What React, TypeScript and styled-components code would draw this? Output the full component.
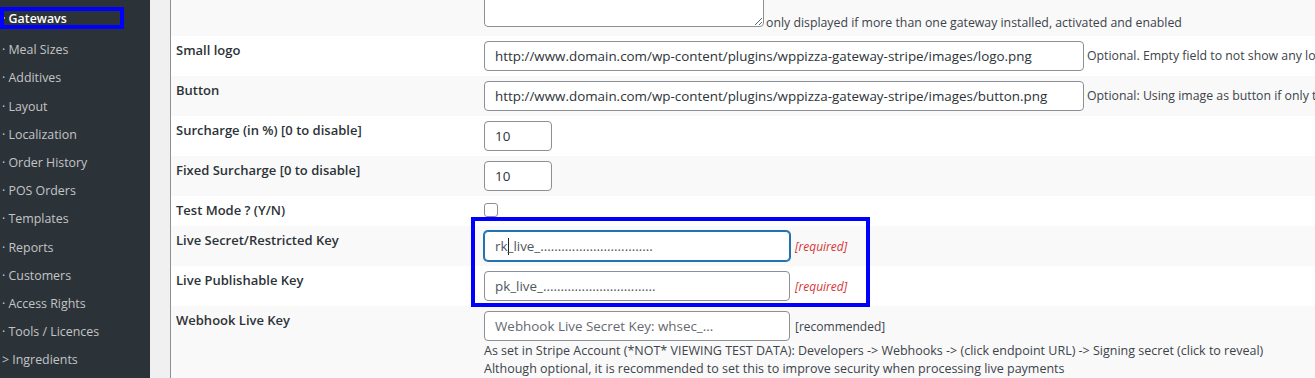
import styled, { createGlobalStyle } from "styled-components";

const GlobalStyle = createGlobalStyle`
  html, body {
    margin: 0;
    padding: 0;
    overflow: hidden;
  }
  body {
    font-family: "Open Sans", "Noto Sans", sans-serif;
    background: #f0f0f1;
  }
`;

const Screen = styled.div`
  position: relative;
  display: flex;
  height: 378px;
  overflow: hidden;
`;

const Sidebar = styled.ul`
  flex: none;
  width: 150px;
  margin: 0;
  padding: 5px 0 0;
  list-style: none;
  background: #2c3338;
`;

const MenuItem = styled.li<{ $current?: boolean }>`
  padding: 5px 0 5px 2px;
  margin-bottom: ${(p) => (p.$current ? "3px" : "0")};
  font-size: 12.4px;
  line-height: 18.2px;
  white-space: nowrap;
  color: ${(p) => (p.$current ? "#fff" : "#c3c4c7")};
  font-weight: ${(p) => (p.$current ? 600 : 400)};
`;

const Gutter = styled.div`
  flex: none;
  width: 20px;
  background: #f0f0f1;
`;

const Panel = styled.div`
  flex: 1;
  min-width: 0;
  overflow: hidden;
  background: #fff;
  border-left: 1px solid #8c8f94;
`;

const Table = styled.div`
  margin-top: -36px;
`;

const Row = styled.div<{ $alt?: boolean }>`
  display: grid;
  grid-template-columns: 313px 1fr;
  padding: 5px 0;
  background: ${(p) => (p.$alt ? "#f9f9f9" : "#fff")};
`;

const Label = styled.div`
  padding-left: 5px;
  font-size: 13px;
  font-weight: 600;
  line-height: 18px;
  color: #2c3338;
`;

const Field = styled.div`
  display: flex;
  align-items: center;
  gap: 3px;
  min-width: 0;
  white-space: nowrap;
`;

const TextareaField = styled(Field)`
  align-items: flex-end;
  gap: 2px;
  padding-bottom: 4px;
`;

const FieldStack = styled.div`
  display: flex;
  flex-direction: column;
  align-items: flex-start;
  min-width: 0;
  white-space: nowrap;
`;

const TextArea = styled.textarea`
  flex: none;
  box-sizing: border-box;
  width: 280px;
  height: 58px;
  margin: 0;
  border: 1px solid #8c8f94;
  border-radius: 4px;
  background: #fff;
  font-family: inherit;
`;

const TextInput = styled.input<{ $width: number; $muted?: boolean }>`
  flex: none;
  box-sizing: border-box;
  width: ${(p) => p.$width}px;
  height: 30px;
  margin: 0;
  padding: 0 10px;
  border: 1px solid #8c8f94;
  border-radius: 4px;
  background: #fff;
  font-family: inherit;
  font-size: 13.4px;
  color: ${(p) => (p.$muted ? "#50575e" : "#2c3338")};
  outline: none;

  &::placeholder {
    color: #646970;
  }
`;

const FocusedInput = styled.div<{ $width: number }>`
  flex: none;
  box-sizing: border-box;
  display: flex;
  align-items: center;
  width: ${(p) => p.$width}px;
  height: 30px;
  padding: 0 10px;
  border: 1px solid #2271b1;
  box-shadow: 0 0 0 1px #2271b1;
  border-radius: 4px;
  background: #fff;
  font-size: 13.4px;
  color: #50575e;
`;

const Caret = styled.span`
  display: inline-block;
  width: 1px;
  height: 17px;
  margin: 0 -1px 0 0;
  background: #1d2327;
`;

const Checkbox = styled.input`
  appearance: none;
  flex: none;
  align-self: flex-start;
  box-sizing: border-box;
  width: 14px;
  height: 14px;
  margin: 2px 0 4px;
  border: 1px solid #8c8f94;
  border-radius: 3px;
  background: #fff;
`;

const Hint = styled.span`
  font-size: 12.3px;
  line-height: 18px;
  color: #3c434a;
`;

const TextareaHint = styled(Hint)`
  margin-bottom: -5px;
`;

const Required = styled.span`
  margin-left: 2px;
  font-size: 12px;
  font-style: italic;
  color: #d63638;
`;

const Note = styled.span`
  margin-left: 2px;
  font-size: 12px;
  color: #3c434a;
`;

const Help = styled.div`
  margin-top: 1px;
  font-size: 12.5px;
  line-height: 17px;
  color: #3c434a;
`;

const Highlight = styled.div<{ $x: number; $y: number; $w: number; $h: number }>`
  position: absolute;
  left: ${(p) => p.$x}px;
  top: ${(p) => p.$y}px;
  width: ${(p) => p.$w}px;
  height: ${(p) => p.$h}px;
  box-sizing: border-box;
  border: 4px solid #0000ff;
  pointer-events: none;
`;

const menu = [
  "· Meal Sizes",
  "· Additives",
  "· Layout",
  "· Localization",
  "· Order History",
  "· POS Orders",
  "· Templates",
  "· Reports",
  "· Customers",
  "· Access Rights",
  "· Tools / Licences",
  "> Ingredients",
];

const App = () => {
  return (
    <Screen>
      <GlobalStyle />
      <Sidebar>
        <MenuItem $current>· Gatewavs</MenuItem>
        {menu.map((m) => (
          <MenuItem key={m}>{m}</MenuItem>
        ))}
      </Sidebar>
      <Gutter />
      <Panel>
        <Table>
          <Row $alt>
            <Label />
            <TextareaField>
              <TextArea />
              <TextareaHint>
                only displayed if more than one gateway installed, activated and enabled
              </TextareaHint>
            </TextareaField>
          </Row>
          <Row>
            <Label>Small logo</Label>
            <Field>
              <TextInput
                $width={600}
                defaultValue="http://www.domain.com/wp-content/plugins/wppizza-gateway-stripe/images/logo.png"
              />
              <Hint>Optional. Empty field to not show any logo</Hint>
            </Field>
          </Row>
          <Row $alt>
            <Label>Button</Label>
            <Field>
              <TextInput
                $width={600}
                defaultValue="http://www.domain.com/wp-content/plugins/wppizza-gateway-stripe/images/button.png"
              />
              <Hint>Optional: Using image as button if only this gateway is enabled</Hint>
            </Field>
          </Row>
          <Row>
            <Label>Surcharge (in %) [0 to disable]</Label>
            <Field>
              <TextInput $width={68} defaultValue="10" />
            </Field>
          </Row>
          <Row $alt>
            <Label>Fixed Surcharge [0 to disable]</Label>
            <Field>
              <TextInput $width={68} defaultValue="10" />
            </Field>
          </Row>
          <Row>
            <Label>Test Mode ? (Y/N)</Label>
            <Field>
              <Checkbox type="checkbox" />
            </Field>
          </Row>
          <Row $alt>
            <Label>Live Secret/Restricted Key</Label>
            <Field>
              <FocusedInput $width={306}>
                rk<Caret />_live_................................
              </FocusedInput>
              <Required>[required]</Required>
            </Field>
          </Row>
          <Row>
            <Label>Live Publishable Key</Label>
            <Field>
              <TextInput
                $width={306}
                $muted
                defaultValue="pk_live_................................"
              />
              <Required>[required]</Required>
            </Field>
          </Row>
          <Row $alt>
            <Label>Webhook Live Key</Label>
            <FieldStack>
              <Field>
                <TextInput $width={306} placeholder="Webhook Live Secret Key: whsec_..." />
                <Note>[recommended]</Note>
              </Field>
              <Help>
                As set in Stripe Account (*NOT* VIEWING TEST DATA): Developers -&gt; Webhooks -&gt; (click endpoint URL) -&gt; Signing secret (click to reveal)
              </Help>
              <Help>
                Although optional, it is recommended to set this to improve security when processing live payments
              </Help>
            </FieldStack>
          </Row>
        </Table>
      </Panel>
      <Highlight $x={0} $y={7} $w={124} $h={22} />
      <Highlight $x={471} $y={217} $w={399} $h={90} />
    </Screen>
  );
};

export default App;
